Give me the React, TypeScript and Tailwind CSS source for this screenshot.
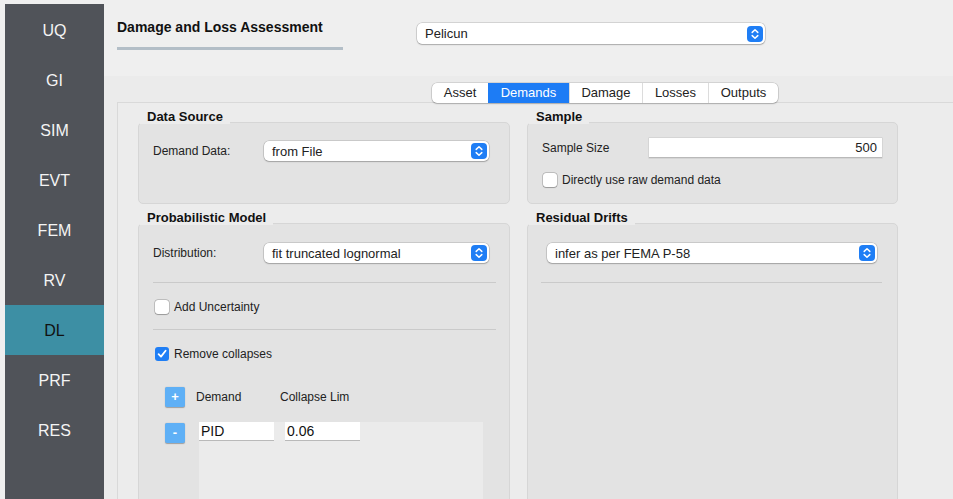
import React from "react";

const Stepper = () => (
  <svg width="16" height="16" viewBox="0 0 16 16" className="shrink-0">
    <rect x="0" y="0" width="16" height="16" rx="4" fill="#1f7ef5" />
    <path d="M5.2 6.4 L8 3.8 L10.8 6.4" fill="none" stroke="#fff" strokeWidth="1.5" strokeLinecap="round" strokeLinejoin="round" />
    <path d="M5.2 9.6 L8 12.2 L10.8 9.6" fill="none" stroke="#fff" strokeWidth="1.5" strokeLinecap="round" strokeLinejoin="round" />
  </svg>
);

const Select = ({ text, className }: { text: string; className: string }) => (
  <div
    className={
      "h-[20px] bg-white rounded-[5px] flex items-center justify-between pl-[8px] pr-[2px] text-[13px] text-[#222] shadow-[0_0_0_0.5px_rgba(0,0,0,0.22),0_1px_1.5px_rgba(0,0,0,0.2)] " +
      className
    }
  >
    <span className="leading-none">{text}</span>
    <Stepper />
  </div>
);

const Checkbox = ({ checked }: { checked?: boolean }) =>
  checked ? (
    <div className="w-[14px] h-[14px] rounded-[3px] bg-[#1f7ef5] flex items-center justify-center shrink-0">
      <svg width="10" height="10" viewBox="0 0 10 10">
        <path d="M1.6 5.2 L4 7.6 L8.6 1.8" fill="none" stroke="#fff" strokeWidth="1.8" strokeLinecap="round" strokeLinejoin="round" />
      </svg>
    </div>
  ) : (
    <div className="w-[14px] h-[14px] rounded-[3px] bg-white shrink-0 shadow-[0_0_0_0.5px_rgba(0,0,0,0.3),0_0.5px_1px_rgba(0,0,0,0.2)]" />
  );

const Group = ({
  title,
  boxClass,
  children,
}: {
  title: string;
  boxClass: string;
  children?: React.ReactNode;
}) => (
  <div className="flex flex-col">
    <div className="relative z-10 self-start ml-[2px] px-[7px] h-[14px] bg-[#ececec] text-[13px] font-bold leading-[14px] text-[#111]">
      {title}
    </div>
    <div className={"-mt-[2px] rounded-[5px] border border-[#d6d6d6] bg-[#e3e3e3] " + boxClass}>{children}</div>
  </div>
);

const Sep = ({ className }: { className: string }) => <div className={"h-[1px] bg-[#cacaca] " + className} />;

export default function App() {
  const nav = ["UQ", "GI", "SIM", "EVT", "FEM", "RV", "DL", "PRF", "RES"];
  const tabs: [string, string][] = [
    ["Asset", "w-[56px]"],
    ["Demands", "w-[81px]"],
    ["Damage", "w-[73px]"],
    ["Losses", "w-[66px]"],
    ["Outputs", "w-[70px]"],
  ];
  return (
    <div className="w-[953px] h-[499px] overflow-hidden bg-[#efefef] flex font-['Liberation_Sans',Arial,sans-serif] text-[#222]">
      {/* sidebar */}
      <div className="ml-[5px] mt-[4px] w-[99px] bg-[#505359] pt-[1px] flex flex-col shrink-0">
        {nav.map((n) => (
          <div
            key={n}
            className={
              "h-[50px] flex items-center justify-center pt-[2px] text-[16px] " +
              (n === "DL" ? "bg-[#3d8fa4] text-[#111]" : "text-[#f4f4f4]")
            }
          >
            {n}
          </div>
        ))}
      </div>

      {/* main */}
      <div className="flex-1 flex flex-col min-w-0">
        {/* header */}
        <div className="h-[76px] flex shrink-0">
          <div className="ml-[13px] w-[226px] pt-[19px] flex flex-col">
            <div className="text-[14px] font-bold leading-[16px] text-[#111]">Damage and Loss Assessment</div>
            <div className="mt-[12px] h-[3px] bg-[#b3bec7]" />
          </div>
          <div className="ml-[74px] mt-[23px]">
            <Select text="Pelicun" className="w-[348px] h-[21px]" />
          </div>
        </div>

        {/* tab area */}
        <div className="flex-1 bg-[#ebebeb] flex flex-col">
          <div className="h-[26px] flex items-end pl-[328px] shrink-0">
            <div className="relative z-10 -mb-[1px] flex h-[20px] bg-white rounded-[5px] overflow-hidden shadow-[0_0_0_0.5px_rgba(0,0,0,0.2),0_1px_1.5px_rgba(0,0,0,0.2)] text-[13px]">
              {tabs.map(([t, w], i) => (
                <div
                  key={t}
                  className={
                    "flex items-center justify-center " +
                    w +
                    " " +
                    (t === "Demands"
                      ? "bg-[#1d7cf5] text-white"
                      : "text-[#222] " + (i > 1 ? "border-l border-[#dcdcdc]" : ""))
                  }
                >
                  {t}
                </div>
              ))}
            </div>
          </div>

          {/* pane */}
          <div className="ml-[13px] flex-1 border-l border-t border-[#d9d9d9] bg-[#ececec] pl-[20px] pt-[7px]">
            <div className="grid grid-cols-[372px_371px] gap-x-[17px] gap-y-[7px]">
              <Group title="Data Source" boxClass="h-[82px] pt-[18px] pl-[14px]">
                <div className="flex items-center h-[20px]">
                  <div className="w-[111px] text-[12px]">Demand Data:</div>
                  <Select text="from File" className="w-[225px]" />
                </div>
              </Group>

              <Group title="Sample" boxClass="h-[82px] pt-[15px] pl-[14px]">
                <div className="flex items-center h-[20px]">
                  <div className="w-[107px] text-[12px]">Sample Size</div>
                  <div className="w-[233px] h-[20px] bg-white border-b border-[#b9b9b9] shadow-[0_0_0_0.5px_rgba(0,0,0,0.12)] flex items-center justify-end pr-[5px] text-[13px]">
                    500
                  </div>
                </div>
                <div className="mt-[15px] flex items-center gap-[5px] h-[14px] pl-[1px]">
                  <Checkbox />
                  <span className="text-[12px]">Directly use raw demand data</span>
                </div>
              </Group>

              <Group title="Probabilistic Model" boxClass="h-[300px] pt-[19px]">
                <div className="flex items-center h-[20px] pl-[14px]">
                  <div className="w-[111px] text-[12px]">Distribution:</div>
                  <Select text="fit truncated lognormal" className="w-[225px]" />
                </div>
                <Sep className="mt-[19px] ml-[14px] mr-[13px]" />
                <div className="mt-[17px] flex items-center gap-[5px] h-[14px] pl-[16px]">
                  <Checkbox />
                  <span className="text-[12px]">Add Uncertainty</span>
                </div>
                <Sep className="mt-[15px] ml-[14px] mr-[13px]" />
                <div className="mt-[17px] flex items-center gap-[5px] h-[14px] pl-[16px]">
                  <Checkbox checked />
                  <span className="text-[12px]">Remove collapses</span>
                </div>
                <div className="mt-[26px] flex items-center h-[20px] pl-[26px] text-[12px]">
                  <div className="w-[20px] h-[20px] rounded-[2px] bg-[#5fb0f6] text-white flex items-center justify-center text-[13px] font-bold shadow-[0_0.5px_1px_rgba(0,0,0,0.3)]">
                    +
                  </div>
                  <span className="ml-[11px] w-[84px]">Demand</span>
                  <span>Collapse Lim</span>
                </div>
                <div className="mt-[16px] flex items-start pl-[26px]">
                  <div className="w-[20px] h-[20px] rounded-[2px] bg-[#5fb0f6] text-white flex items-center justify-center text-[13px] font-bold shadow-[0_0.5px_1px_rgba(0,0,0,0.3)]">
                    -
                  </div>
                  <div className="ml-[14px] -mt-[1px] w-[284px] h-[120px] bg-[#ebebeb] flex gap-[11px] items-start">
                    <div className="w-[75px] h-[19px] bg-white border-b border-[#b9b9b9] flex items-center pl-[2px] text-[14px] text-[#111]">
                      PID
                    </div>
                    <div className="w-[75px] h-[19px] bg-white border-b border-[#b9b9b9] flex items-center pl-[2px] text-[14px] text-[#111]">
                      0.06
                    </div>
                  </div>
                </div>
              </Group>

              <Group title="Residual Drifts" boxClass="h-[300px] pt-[19px]">
                <div className="pl-[19px]">
                  <Select text="infer as per FEMA P-58" className="w-[330px]" />
                </div>
                <Sep className="mt-[19px] ml-[13px] mr-[15px]" />
              </Group>
            </div>
          </div>
        </div>
      </div>
    </div>
  );
}
